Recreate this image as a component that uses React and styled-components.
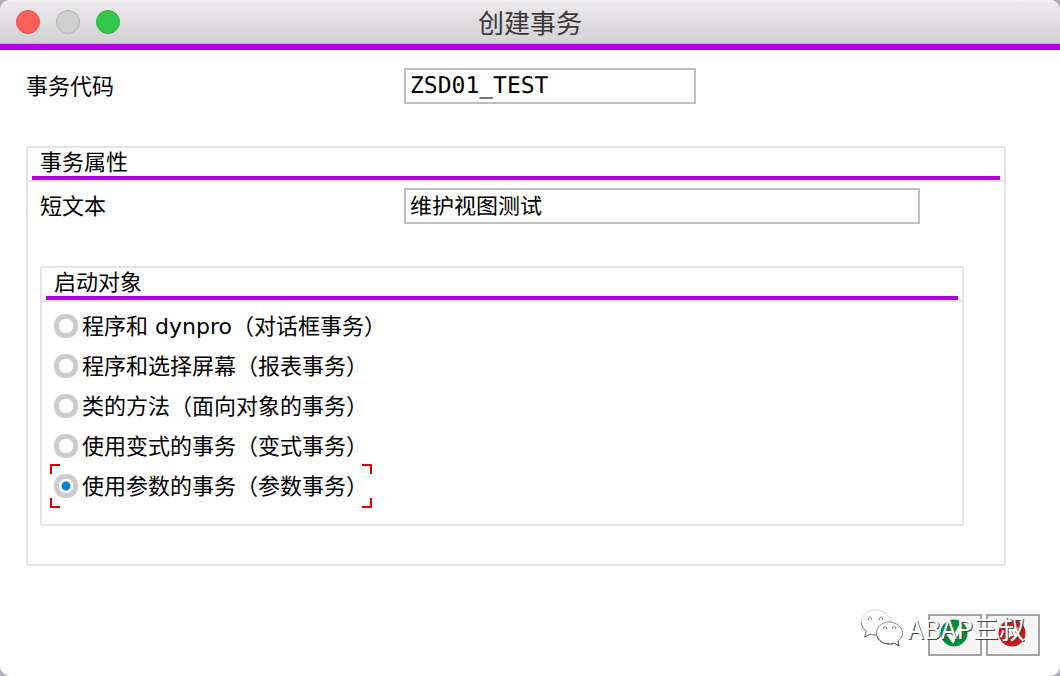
import { useState } from "react";
import styled, { createGlobalStyle } from "styled-components";

const GlobalStyle = createGlobalStyle`
  * {
    box-sizing: border-box;
  }
  body {
    margin: 0;
    background: #b3adb5;
    color: #000;
    font-family: "DejaVu Sans", "Noto Sans CJK SC", sans-serif;
    font-size: 22px;
    line-height: 32px;
  }
`;

const Window = styled.div`
  position: relative;
  display: flex;
  flex-direction: column;
  min-height: 100vh;
  border-radius: 10px;
  overflow: hidden;
  background: #fff;
`;

const TitleBar = styled.header`
  display: grid;
  grid-template-columns: 1fr auto 1fr;
  align-items: center;
  height: 50px;
  padding: 0 16px;
  border-bottom: 6px solid #b000e0;
  background: linear-gradient(#f5f4f5 0, #ebe9eb 3px, #d4d2d4 42px, #b5b3b5 44px);

  h1 {
    margin: 0;
    color: #3a383a;
    font-family: "Noto Sans CJK SC", sans-serif;
    font-size: 26px;
    font-weight: 400;
    line-height: 44px;
  }
`;

const Lights = styled.div`
  display: flex;
  gap: 16px;
`;

const Light = styled.button`
  width: 24px;
  height: 24px;
  padding: 0;
  border: 1px solid ${({ $edge }) => $edge};
  border-radius: 50%;
  background: ${({ $color }) => $color};
`;

const Form = styled.form`
  display: flex;
  flex: 1;
  flex-direction: column;
  padding: 18px 20px 20px 26px;
`;

const Row = styled.div`
  display: grid;
  grid-template-columns: ${({ $label }) => $label}px 1fr;
  align-items: center;

  label {
    padding-top: 2px;
  }
`;

const TextBox = styled.input`
  width: 100%;
  max-width: ${({ $width }) => $width}px;
  height: 36px;
  padding: ${({ $mono }) => ($mono ? "0 4px" : "0 4px 2px")};
  border: 2px solid #bfbfbf;
  border-radius: 0;
  outline: none;
  background: #fff;
  color: #000;
  font-family: ${({ $mono }) => ($mono ? '"DejaVu Sans Mono", ' : "")}"Noto Sans CJK SC", monospace;
  font-size: ${({ $mono }) => ($mono ? 23 : 22)}px;
  line-height: ${({ $mono }) => ($mono ? 32 : 28)}px;
  text-rendering: geometricPrecision;
`;

const Group = styled.fieldset`
  min-width: 0;
  margin: 42px ${({ $right }) => $right}px 0 0;
  padding: 0;
  border: 2px solid #e4e4e4;
`;

const GroupTitle = styled.h2`
  margin: 0;
  padding: 0 4px;
  border-bottom: 2px solid #e4e4e4;
  font-size: 22px;
  font-weight: 400;
  line-height: 26px;

  span {
    display: block;
    padding: 2px 0 0 8px;
    border-bottom: 4px solid #b000e0;
  }
`;

const GroupBody = styled.div`
  padding: 6px 0 38px 12px;
`;

const Options = styled.div`
  display: flex;
  flex-direction: column;
  align-items: flex-start;
  padding: 4px 8px 18px;
`;

const Option = styled.label`
  position: relative;
  display: flex;
  align-items: center;
  gap: 4px;
  height: 40px;
  padding: 0 4px;
  white-space: nowrap;

  input {
    appearance: none;
    width: 24px;
    height: 24px;
    margin: 0;
    border: 5px solid #ccc;
    border-radius: 11px;
    outline: none;
    background: #fff;
  }
  input:checked {
    background: radial-gradient(circle, #0a84c8 4px, #fff 5px);
  }
  span {
    padding-top: 2px;
  }
`;

const Corner = styled.i`
  position: absolute;
  width: 10px;
  height: 10px;
  border: 0 solid #e00000;
  ${({ $v }) => $v}: -2px;
  ${({ $h }) => $h}: 0;
  border-${({ $v }) => $v}-width: 2px;
  border-${({ $h }) => $h}-width: 2px;
`;

const Footer = styled.footer`
  display: flex;
  justify-content: flex-end;
  gap: 4px;
  margin-top: auto;
`;

const IconButton = styled.button`
  display: flex;
  align-items: center;
  justify-content: center;
  width: 54px;
  height: 42px;
  padding: 0 3px 4px 0;
  border: 2px solid #a3a3a3;
  background: #f5f5f5;
`;

const Watermark = styled.div`
  position: absolute;
  right: 35px;
  bottom: 29px;
  display: flex;
  align-items: center;
  gap: 5px;
  color: #fff;
  font-family: "Noto Sans CJK SC", sans-serif;
  font-size: 26px;
  line-height: 38px;
  text-shadow: 1px 1px 0 #444;
  pointer-events: none;
`;

const OPTIONS = [
  "程序和 dynpro（对话框事务）",
  "程序和选择屏幕（报表事务）",
  "类的方法（面向对象的事务）",
  "使用变式的事务（变式事务）",
  "使用参数的事务（参数事务）",
];

function StartOptions() {
  const [selected, setSelected] = useState(4);

  return (
    <Options>
      {OPTIONS.map((text, i) => (
        <Option key={text}>
          <input
            type="radio"
            name="start"
            checked={selected === i}
            onChange={() => setSelected(i)}
          />
          <span>{text}</span>
          {selected === i && (
            <>
              <Corner $v="top" $h="left" />
              <Corner $v="top" $h="right" />
              <Corner $v="bottom" $h="left" />
              <Corner $v="bottom" $h="right" />
            </>
          )}
        </Option>
      ))}
    </Options>
  );
}

function ChatLogo() {
  return (
    <svg width="42" height="38" viewBox="0 0 42 38" fill="#fff" strokeWidth="1">
      <path
        d="M14.5 1C7 1 .5 6 .5 13c0 4 2 7 5 9l-2 6 6-3c2 1 4 1 6 1 8 0 14-6 14-13S22 1 14.5 1z"
        stroke="#d4d4d4"
      />
      <path d="M.5 14c0 4 2 6 5 8l-2 6 6-3c2 1 4 1 6 1" fill="none" stroke="#777" />
      <path
        d="M28 13c-7 0-12.500 5-12.500 11S21 35 28 35c2 0 4 0 5-1l5 3-1-5c3-2 4.500-5 4.500-8C41.500 18 35 13 28 13z"
        stroke="#8a8a8a"
      />
      <path d="M16 27c2 5 6 8 12 8 2 0 4 0 5-1l5 3-1-5" fill="none" stroke="#555" />
      <g fill="none" stroke="#777">
        <path d="M7.500 11c-1-4 4-4 3 0M18.500 11c-1-4 4-4 3 0" />
        <path d="M22.500 20c-1-3 4-3 3 0M31.500 20c-1-3 4-3 3 0" />
      </g>
    </svg>
  );
}

function App() {
  const [code, setCode] = useState("ZSD01_TEST");
  const [shortText, setShortText] = useState("维护视图测试");

  return (
    <>
      <GlobalStyle />
      <Window>
        <TitleBar>
          <Lights>
            <Light aria-label="关闭" $color="#fc605b" $edge="#e2504b" />
            <Light aria-label="最小化" $color="#d0cfd0" $edge="#b4b3b4" />
            <Light aria-label="缩放" $color="#34c84a" $edge="#2bae3c" />
          </Lights>
          <h1>创建事务</h1>
        </TitleBar>

        <Form onSubmit={(e) => e.preventDefault()}>
          <Row $label={378}>
            <label htmlFor="code">事务代码</label>
            <TextBox
              id="code"
              value={code}
              onChange={(e) => setCode(e.target.value)}
              $width={292}
              $mono
            />
          </Row>

          <Group $right={34} aria-labelledby="attributes">
            <GroupTitle id="attributes">
              <span>事务属性</span>
            </GroupTitle>
            <GroupBody>
              <Row $label={364}>
                <label htmlFor="short-text">短文本</label>
                <TextBox
                  id="short-text"
                  value={shortText}
                  onChange={(e) => setShortText(e.target.value)}
                  $width={516}
                />
              </Row>

              <Group $right={40} aria-labelledby="start-object">
                <GroupTitle id="start-object">
                  <span>启动对象</span>
                </GroupTitle>
                <StartOptions />
              </Group>
            </GroupBody>
          </Group>

          <Footer>
            <IconButton type="submit" aria-label="确认">
              <svg width="28" height="28" viewBox="0 0 28 28">
                <circle cx="14" cy="14" r="13.5" fill="#008c3c" />
                <path d="M8 14l5 7 8-14" fill="none" stroke="#fff" strokeWidth="4" />
              </svg>
            </IconButton>
            <IconButton type="button" aria-label="取消">
              <svg width="28" height="28" viewBox="0 0 28 28">
                <circle cx="14" cy="14" r="13.5" fill="#cc1a1a" />
                <path d="M9 8l10 10M19 8L9 18" stroke="#fff" strokeWidth="4" />
              </svg>
            </IconButton>
          </Footer>
        </Form>

        <Watermark>
          <ChatLogo />
          ABAP三叔
        </Watermark>
      </Window>
    </>
  );
}

export default App;
